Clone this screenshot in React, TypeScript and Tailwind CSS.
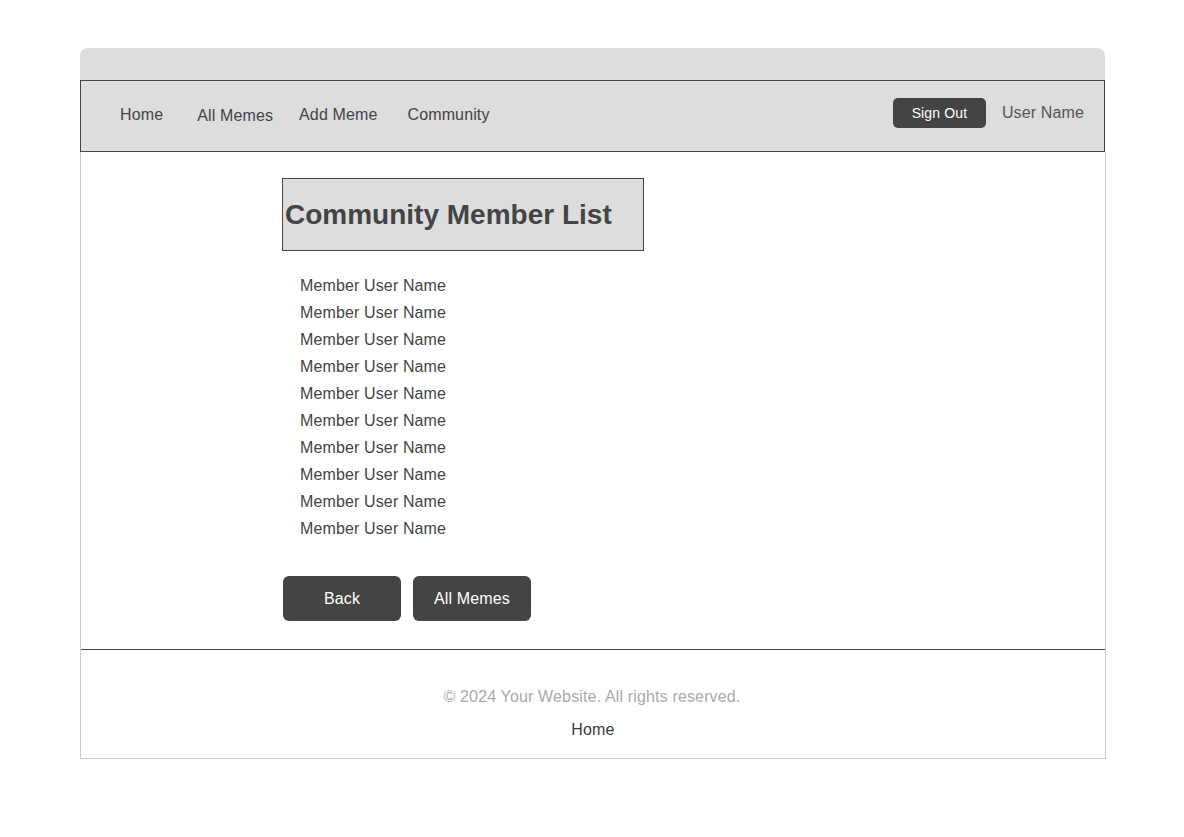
const members = Array.from({ length: 10 }, () => 'Member User Name');

export default function App() {
  return (
    <div className="min-h-screen bg-white font-['Liberation_Sans',Arial,sans-serif] text-[#444]">
      <div className="ml-[80px] pt-[48px] w-[1026px]">
        {/* top strip */}
        <div className="w-[1025px] h-[32px] bg-[#ddd] rounded-t-lg" />

        {/* nav */}
        <div className="w-[1025px] h-[72px] bg-[#ddd] border border-[#444] flex items-center text-base tracking-[0.13px]">
          <a className="ml-[39px] -mt-[3px]">Home</a>
          <a className="ml-[34px] -mt-[1px]">All Memes</a>
          <a className="ml-[26px] -mt-[3px]">Add Meme</a>
          <a className="ml-[30px] -mt-[3px]">Community</a>
          <div className="ml-auto mr-[20px] flex items-center gap-[16px] -mt-[7px]">
            <button className="w-[93px] h-[30px] rounded-[5px] bg-[#444] text-white text-sm">Sign Out</button>
            <span className="text-[#555]">User Name</span>
          </div>
        </div>

        {/* content */}
        <div className="border-l border-r border-b border-[#ccc]">
          <div className="ml-[201px] pt-[26px] pb-[28px]">
            <div className="w-[362px] h-[73px] bg-[#ddd] border border-[#444] flex items-center pl-[2px]">
              <h1 className="text-[28px] font-bold text-[#444]">Community Member List</h1>
            </div>

            <ul className="mt-[21px] ml-[18px] tracking-[0.13px]">
              {members.map((m, i) => (
                <li key={i} className="leading-[27px] text-base">{m}</li>
              ))}
            </ul>

            <div className="mt-[34px] flex gap-[12px] tracking-[0.13px]">
              <button className="ml-[1px] w-[118px] h-[45px] rounded-md bg-[#444] text-white text-base">Back</button>
              <button className="w-[118px] h-[45px] rounded-md bg-[#444] text-white text-base">All Memes</button>
            </div>
          </div>

          <footer className="border-t border-[#444] w-[1024px] flex flex-col items-center pt-[36px] pb-[17px] tracking-[0.15px]">
            <p className="-ml-[2px] text-[#aaa] text-base leading-[22px]">© 2024 Your Website. All rights reserved.</p>
            <a className="mt-[11px] text-[#3a3a3a] text-base leading-[22px]">Home</a>
          </footer>
        </div>
      </div>
    </div>
  );
}
